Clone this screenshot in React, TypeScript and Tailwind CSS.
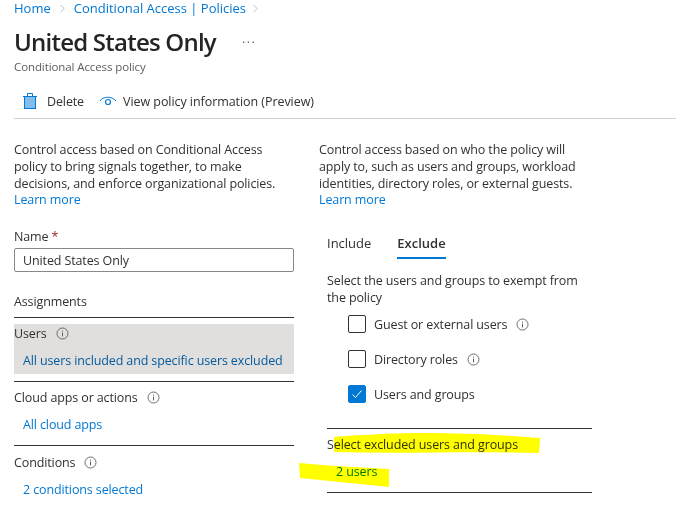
import { ChevronRight } from 'lucide-react';

const Info = () => (
  <svg width="13" height="13" viewBox="0 0 13 13" fill="none" className="shrink-0">
    <circle cx="6.5" cy="6.5" r="5.5" stroke="#605e5c" strokeWidth="0.9" />
    <rect x="6" y="5.6" width="1" height="3.8" fill="#605e5c" />
    <rect x="6" y="3.6" width="1" height="1" fill="#605e5c" />
  </svg>
);

const Section = ({ title, value, active }: { title: string; value: string; active?: boolean }) => (
  <div className={active ? 'h-[50px] bg-[#e1dfdd]' : 'h-[50px]'}>
    <div className="flex h-[19px] items-center gap-[9px]">
      <span>{title}</span>
      <Info />
    </div>
    <div className={`mt-2 h-[19px] pl-[9px] leading-[19px] ${active ? 'text-[#005a9e]' : 'text-[#0078d4]'}`}>{value}</div>
  </div>
);

const Check = ({ label, info, checked }: { label: string; info?: boolean; checked?: boolean }) => (
  <div className="flex h-[18px] items-center">
    <div
      className={`flex h-[18px] w-[18px] items-center justify-center rounded-[2px] border ${
        checked ? 'border-[#0078d4] bg-[#0078d4]' : 'border-[#323130] bg-white'
      }`}
    >
      {checked && (
        <svg width="12" height="12" viewBox="0 0 12 12" fill="none">
          <path d="M1.5 6.5 4.5 9.5 10.5 2.5" stroke="white" strokeWidth="1" />
        </svg>
      )}
    </div>
    <span className="ml-2">{label}</span>
    {info && (
      <span className="ml-[9px]">
        <Info />
      </span>
    )}
  </div>
);

export default function App() {
  return (
    <div className="relative h-[505px] w-[676px] overflow-hidden bg-white text-[12.5px] leading-[17px] text-[#323130] [font-family:'Open_Sans',sans-serif] tracking-[-0.12px]">
      <div className="pl-[14px]">
        <nav className="flex h-[17px] items-center text-[13px] tracking-normal text-[#0078d4]">
          <span>Home</span>
          <ChevronRight size={13} strokeWidth={1} className="mx-[5px] text-[#8a8886]" />
          <span>Conditional Access | Policies</span>
          <ChevronRight size={13} strokeWidth={1} className="mx-[3px] text-[#8a8886]" />
        </nav>
        <div className="mt-[8px] flex h-[34px] items-center">
          <h1 className="text-[24px] font-semibold leading-[34px] tracking-[-0.77px] text-[#252423]">United States Only</h1>
          <span className="ml-[26px] tracking-[1.5px] text-[#605e5c]">···</span>
        </div>
        <p className="h-[15px] text-[11.5px] leading-[15px] tracking-[-0.1px] text-[#605e5c]">Conditional Access policy</p>
        <div className="mt-[17px] flex h-[20px] items-center pl-[9px]">
          <svg width="14" height="16" viewBox="0 0 14 16" fill="none">
            <path d="M0 3.5h14M4.5 3V.5h5V3" stroke="#0078d4" strokeWidth="1" />
            <rect x="1.5" y="3.5" width="11" height="12" fill="#83bdea" stroke="#0078d4" />
          </svg>
          <span className="ml-[10px]">Delete</span>
          <svg width="18" height="12" viewBox="0 0 18 12" fill="none" className="ml-[15px]">
            <path d="M1 6C4 1 13 1 17 6" stroke="#0078d4" strokeWidth="1" />
            <circle cx="9" cy="7" r="2.5" stroke="#0078d4" strokeWidth="1.2" />
          </svg>
          <span className="ml-[6px] tracking-[-0.06px]">View policy information (Preview)</span>
        </div>
        <div className="mt-[7px] h-px bg-[#d2d0ce]" />

        <div className="mt-[22px] flex gap-[25px]">
          <div className="w-[280px]">
            <p>
              Control access based on Conditional Access policy to bring signals together, to make decisions, and enforce organizational policies.
            </p>
            <a className="-mt-px block text-[#0078d4]">Learn more</a>

            <div className="mt-[20px] h-[17px]">
              Name <span className="text-[#a4262c]">*</span>
            </div>
            <div className="mt-[3px] flex h-[24px] items-center rounded-[2px] border border-[#8a8886] pl-2">United States Only</div>
            <div className="mt-[21px] h-[17px]">Assignments</div>
            <div className="mt-[7px] h-px bg-[#323130]" />
            <div className="mt-[6px]">
              <Section title="Users" value="All users included and specific users excluded" active />
            </div>
            <div className="mt-[7px] h-px bg-[#323130]" />
            <div className="mt-[6px]">
              <Section title="Cloud apps or actions" value="All cloud apps" />
            </div>
            <div className="mt-[7px] h-px bg-[#323130]" />
            <div className="mt-[7px]">
              <Section title="Conditions" value="2 conditions selected" />
            </div>
          </div>

          <div className="w-[273px]">
            <p>
              Control access based on who the policy will apply to, such as users and groups, workload identities, directory roles, or external guests.
            </p>
            <a className="-mt-px block text-[#0078d4]">Learn more</a>

            <div className="pl-[8px]">
              <div className="mt-[27px] flex gap-[26px] text-[13px] tracking-normal">
                <span className="h-[24px]">Include</span>
                <span className="h-[24px] border-b-2 border-[#0078d4] font-semibold">Exclude</span>
              </div>
              <p className="mt-[13px]">Select the users and groups to exempt from the policy</p>
              <div className="ml-[21px] mt-[9px] flex flex-col gap-[17px]">
                <Check label="Guest or external users" info />
                <Check label="Directory roles" info />
                <Check label="Users and groups" checked />
              </div>
              <div className="mt-[25px] h-px bg-[#323130]" />
              <div className="mt-[7px]">Select excluded users and groups</div>
              <div className="mt-[10px] pl-[9px] text-[#0078d4]">2 users</div>
              <div className="mt-[12px] h-px bg-[#323130]" />
            </div>
          </div>
        </div>
      </div>

      {/* marker scribble on top of the screenshot */}
      <svg width="676" height="505" className="pointer-events-none absolute left-0 top-0 mix-blend-multiply">
        <path d="M334 437 C400 432 450 431 540 438 L539 453 C470 451 400 454 334 452 Z" fill="#ffff00" />
        <path d="M299 463 C330 466 360 467 389 469 L389 487 C360 484 330 481 300 478 Z" fill="#ffff00" />
      </svg>
    </div>
  );
}
